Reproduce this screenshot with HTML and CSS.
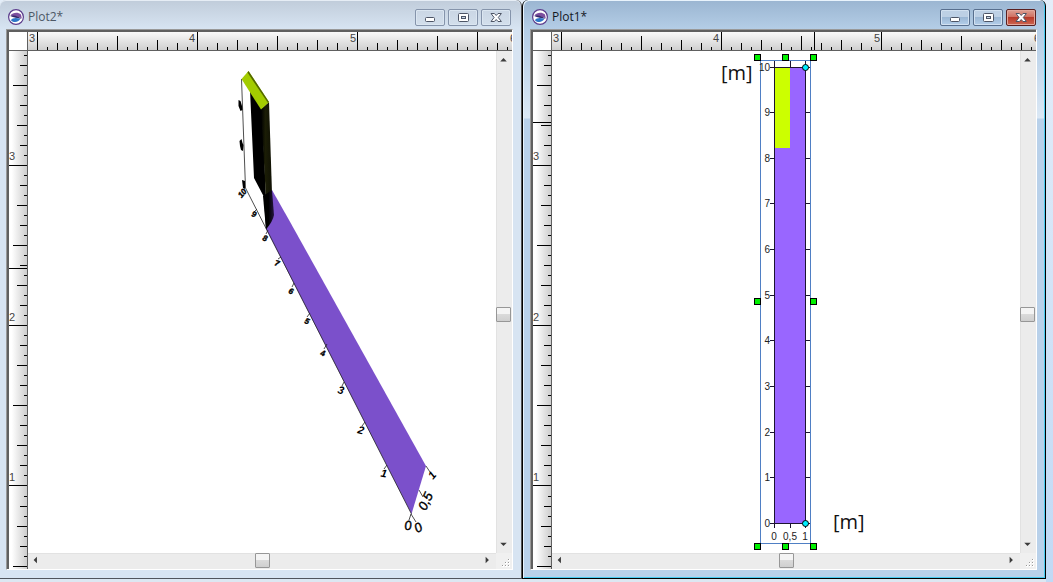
FILE: index.html
```html
<!DOCTYPE html>
<html lang="en">
<head>
<meta charset="utf-8">
<title>Plots</title>
<link rel="stylesheet" href="styles.css">
</head>
<body>
<svg class="defs" aria-hidden="true">
  <defs>
    <path id="h-unit" d="M10.5 15v3M20.5 11v7M30.5 15v3M40.5 8v10M50.5 15v3M60.5 11v7M70.5 15v3M80.5 4v14M90.5 15v3M100.5 11v7M110.5 15v3M120.5 8v10M130.5 15v3M140.5 11v7M150.5 15v3"/>
    <path id="v-unit" d="M15 10.5h3M11 20.5h7M15 30.5h3M8 40.5h10M15 50.5h3M11 60.5h7M15 70.5h3M4 80.5h14M15 90.5h3M11 100.5h7M15 110.5h3M8 120.5h10M15 130.5h3M11 140.5h7M15 150.5h3"/>
    <symbol id="logo" viewBox="0 0 16 16">
      <circle cx="8" cy="8" r="7.4" fill="#fff" stroke="#5b3c8c" stroke-width="1.2"/>
      <path d="M2.400 6.400C4.800 3.200 10 2.800 13 5.400L13.800 9.400C11 7.400 6 7 2.400 6.400Z" fill="#7d4f9e"/>
      <path d="M2.200 7C6 5.800 10.500 7 13.400 10C9.500 8.800 5.500 8.600 2.200 7Z" fill="#35276b"/>
      <path d="M2.800 11.200C4.400 8.800 8 8.200 12.400 9.800C11 13 6 14.400 2.800 11.200Z" fill="#2f77c8"/>
    </symbol>
    <symbol id="minimize" viewBox="0 0 30 17"><rect x="10.500" y="8.500" width="9" height="4" rx="1" fill="#fff" stroke="#4d5566"/></symbol>
    <symbol id="maximize" viewBox="0 0 30 17"><rect x="10.500" y="4.500" width="10" height="8" rx="1" fill="#fff" stroke="#4d5566"/><rect x="13.500" y="7.500" width="4" height="2" fill="#c8d6e6" stroke="#4d5566"/></symbol>
    <symbol id="close" viewBox="0 0 30 17"><path d="M10 4.500h3.400l1.800 2 1.800-2h3.400l-3.100 4 3.100 4H17l-1.800-2-1.800 2H10l3.100-4Z" fill="#fff" stroke="#4d5566"/></symbol>
    <symbol id="grip" viewBox="0 0 16 16"><path d="M12 6h2v2h-2zM9 9h2v2H9zM12 9h2v2h-2zM6 12h2v2H6zM9 12h2v2H9zM12 12h2v2h-2z" fill="#fff"/><path d="M12 6h1v1h-1zM9 9h1v1H9zM12 9h1v1h-1zM6 12h1v1H6zM9 12h1v1H9zM12 12h1v1h-1z" fill="#999"/></symbol>
    <linearGradient id="wall" x1="0" x2="1"><stop offset="0" stop-color="#000"/><stop offset=".4" stop-color="#1b1d06"/><stop offset="1" stop-color="#101104"/></linearGradient>
    <linearGradient id="foot" x1="0" y1="0" x2="1" y2="0"><stop offset=".5" stop-color="#000"/><stop offset="1" stop-color="#241540"/></linearGradient>
  </defs>
</svg>

<main class="desktop">
  <section class="window" aria-labelledby="t2">
    <header class="titlebar">
      <svg class="logo" aria-hidden="true"><use href="#logo"/></svg>
      <h2 class="title" id="t2">Plot2*</h2>
      <div class="controls">
        <button class="control" aria-label="Minimize"><svg><use href="#minimize"/></svg></button>
        <button class="control" aria-label="Maximize"><svg><use href="#maximize"/></svg></button>
        <button class="control" aria-label="Close"><svg><use href="#close"/></svg></button>
      </div>
    </header>
    <div class="client">
      <div class="corner"></div>
      <svg class="ruler ruler-h" aria-hidden="true">
        <g class="ticks">
          <use href="#h-unit" x="9"/><use href="#h-unit" x="169"/><use href="#h-unit" x="329"/>
          <path d="M9.500 0v18M169.500 0v18M329.500 0v18M449.500 0v8"/>
        </g>
        <text x="1" y="10">3</text><text x="161" y="10">4</text><text x="322" y="10">5</text><text x="482" y="10">6</text>
      </svg>
      <svg class="ruler ruler-v" aria-hidden="true">
        <g class="ticks">
          <use href="#v-unit" y="-46"/><use href="#v-unit" y="114"/><use href="#v-unit" y="274"/><use href="#v-unit" y="435"/>
          <path d="M0 114.500h18M0 274.500h18M0 434.500h18M0 217.500h18"/>
        </g>
        <text x="0" y="109">3</text><text x="0" y="270">2</text><text x="0" y="430">1</text>
      </svg>
      <svg class="canvas" role="img" aria-label="Three-dimensional plot">
        <g transform="translate(-28 -51)">
          <path d="M272 190L289 220L426 466L411.500 514L266 229Z" fill="#7b50cb"/>
          <path d="M241.500 79L245.500 188L411.500 514" fill="none" stroke="#222" stroke-width=".8"/>
          <path d="M250 90L262 108L266 198L266 229L264 197L254 178Z" fill="#000"/>
          <path d="M261 109L269 102L272 193L266 199Z" fill="url(#wall)"/>
          <path d="M263 196L272 190L274 215Q273 221 266 229.500Z" fill="url(#foot)"/>
          <path d="M241.500 79L248.500 71L269 102L261 109.500Z" fill="#a3cc00"/>
          <path d="M248.500 71L269 102L268 103L247.500 72.500Z" fill="#526600"/>
          <path d="M238.500 100l2 1 1.500 5 .5 4-2 1-2-5zM239.500 141l2-2 1 4 1 2-.5 6-2-1-1-4zM242 180l3 1v8l-2-1z" fill="#000"/>
          <path d="M254 212l3-3M266 234l2-4M278 259l3-2M292 287l2-4M307 317l3-4M324 349l3-5M342 386l2-4M362 426l3-4M384 469l3-4M409 520l2-6L416 522M419 490L423 497M426 466l4 6" fill="none" stroke="#222" stroke-width=".8"/>
          <g class="axis-3d">
            <text class="far" transform="translate(242 193) rotate(-50)" y="3">10</text>
            <text class="far" transform="translate(254 214) rotate(20)" y="3">9</text>
            <text class="far" transform="translate(265 238) rotate(20)" y="3">8</text>
            <text class="far" transform="translate(277 263) rotate(20)" y="3">7</text>
            <text class="far" transform="translate(291 291) rotate(20)" y="3">6</text>
            <text class="far" transform="translate(307 321) rotate(20)" y="3">5</text>
            <text class="far" transform="translate(323 353) rotate(15)" y="3">4</text>
            <text class="middle" transform="translate(341 390) rotate(15)" y="4">3</text>
            <text class="middle" transform="translate(361 430) rotate(15)" y="4">2</text>
            <text class="middle" transform="translate(384 473) rotate(10)" y="4">1</text>
            <text class="near" transform="translate(408 525) rotate(-5)" y="5">0</text>
            <text class="near" transform="translate(418 527) rotate(-30)" y="5">0</text>
            <text class="near" transform="translate(425 501) rotate(-65)" y="5">0,5</text>
            <text class="middle" transform="translate(432 475) rotate(-50)" y="4">1</text>
          </g>
        </g>
      </svg>
      <div class="scroll scroll-v">
        <button class="arrow" aria-label="Scroll up"><svg viewBox="0 0 16 16"><path d="M8 6.500L11.500 10H4.500Z"/></svg></button>
        <button class="thumb" aria-label="Vertical position"></button>
        <button class="arrow" aria-label="Scroll down"><svg viewBox="0 0 16 16"><path d="M8 9.500L11.500 6H4.500Z"/></svg></button>
      </div>
      <div class="scroll scroll-h">
        <button class="arrow" aria-label="Scroll left"><svg viewBox="0 0 16 16"><path d="M6 7.500L9.500 4V11Z"/></svg></button>
        <button class="thumb" aria-label="Horizontal position"></button>
        <button class="arrow" aria-label="Scroll right"><svg viewBox="0 0 16 16"><path d="M9.500 7.500L6 4V11Z"/></svg></button>
      </div>
      <svg class="grip" aria-hidden="true"><use href="#grip"/></svg>
    </div>
  </section>

  <section class="window active" aria-labelledby="t1">
    <header class="titlebar">
      <svg class="logo" aria-hidden="true"><use href="#logo"/></svg>
      <h2 class="title" id="t1">Plot1*</h2>
      <div class="controls">
        <button class="control" aria-label="Minimize"><svg><use href="#minimize"/></svg></button>
        <button class="control" aria-label="Maximize"><svg><use href="#maximize"/></svg></button>
        <button class="control close" aria-label="Close"><svg><use href="#close"/></svg></button>
      </div>
    </header>
    <div class="client">
      <div class="corner"></div>
      <svg class="ruler ruler-h" aria-hidden="true">
        <g class="ticks">
          <use href="#h-unit" x="9"/><use href="#h-unit" x="169"/><use href="#h-unit" x="329"/>
          <path d="M9.500 0v18M169.500 0v18M329.500 0v18M262.500 0v18"/>
        </g>
        <text x="1" y="10">3</text><text x="161" y="10">4</text><text x="322" y="10">5</text><text x="482" y="10">6</text>
      </svg>
      <svg class="ruler ruler-v" aria-hidden="true">
        <g class="ticks">
          <use href="#v-unit" y="-46"/><use href="#v-unit" y="114"/><use href="#v-unit" y="274"/><use href="#v-unit" y="435"/>
          <path d="M0 114.500h18M0 274.500h18M0 434.500h18M0 71.500h18"/>
        </g>
        <text x="0" y="109">3</text><text x="0" y="270">2</text><text x="0" y="430">1</text>
      </svg>
      <svg class="canvas" role="img" aria-label="Two-dimensional plot in metres">
        <g transform="translate(-552 -51)">
          <rect x="774" y="67" width="32" height="457" fill="#9966ff"/>
          <rect x="774" y="67" width="16" height="81" fill="#ccff00"/>
          <path class="axis-line" d="M774.500 61v467M805.500 61v467M770 67.500h40M770 523.500h40M790.500 61v6M790.500 524v4M770 112.500h4M770 158.500h4M770 203.500h4M770 249.500h4M770 295.500h4M770 340.500h4M770 386.500h4M770 432.500h4M770 477.500h4M806 112.500h4M806 158.500h4M806 203.500h4M806 249.500h4M806 295.500h4M806 340.500h4M806 386.500h4M806 432.500h4M806 477.500h4"/>
          <rect x="760.500" y="60.500" width="50" height="483" fill="none" stroke="#4f7fc4"/>
          <g class="axis-y">
            <text x="770" y="71">10</text><text x="770" y="116">9</text><text x="770" y="162">8</text><text x="770" y="207">7</text><text x="770" y="253">6</text><text x="770" y="299">5</text><text x="770" y="344">4</text><text x="770" y="390">3</text><text x="770" y="436">2</text><text x="770" y="481">1</text><text x="770" y="527">0</text>
          </g>
          <g class="axis-x">
            <text x="774" y="540">0</text><text x="790" y="540">0,5</text><text x="805" y="540">1</text>
          </g>
          <g class="unit"><text x="721" y="80">[m]</text><text x="833" y="529">[m]</text></g>
          <g class="handles">
            <rect x="754.500" y="54.500" width="6" height="6"/><rect x="782.500" y="54.500" width="6" height="6"/><rect x="810.500" y="54.500" width="6" height="6"/>
            <rect x="754.500" y="298.500" width="6" height="6"/><rect x="810.500" y="298.500" width="6" height="6"/>
            <rect x="754.500" y="543.500" width="6" height="6"/><rect x="782.500" y="543.500" width="6" height="6"/><rect x="810.500" y="543.500" width="6" height="6"/>
          </g>
          <g class="nodes"><circle cx="805.500" cy="67.500" r="3"/><circle cx="805.500" cy="523.500" r="3"/></g>
        </g>
      </svg>
      <div class="scroll scroll-v">
        <button class="arrow" aria-label="Scroll up"><svg viewBox="0 0 16 16"><path d="M8 6.500L11.500 10H4.500Z"/></svg></button>
        <button class="thumb" aria-label="Vertical position"></button>
        <button class="arrow" aria-label="Scroll down"><svg viewBox="0 0 16 16"><path d="M8 9.500L11.500 6H4.500Z"/></svg></button>
      </div>
      <div class="scroll scroll-h">
        <button class="arrow" aria-label="Scroll left"><svg viewBox="0 0 16 16"><path d="M6 7.500L9.500 4V11Z"/></svg></button>
        <button class="thumb" aria-label="Horizontal position"></button>
        <button class="arrow" aria-label="Scroll right"><svg viewBox="0 0 16 16"><path d="M9.500 7.500L6 4V11Z"/></svg></button>
      </div>
      <svg class="grip" aria-hidden="true"><use href="#grip"/></svg>
    </div>
  </section>
</main>
</body>
</html>
```

FILE: styles.css
```css
* { box-sizing: border-box; }

body {
  margin: 0;
  font-family: "Liberation Sans", Arial, sans-serif;
  background: #cddcec;
}

.defs { position: absolute; width: 0; height: 0; }

.desktop {
  display: grid;
  grid-template-columns: 522fr 524fr;
  min-height: 100vh;
  padding: 0 7px 3px 0;
  background: linear-gradient(#e4eef9, #c0d9f5);
}

.window {
  display: flex;
  flex-direction: column;
  min-width: 0;
  padding: 0 8px 8px 6px;
  border-right: 1px solid #555;
  border-bottom: 1px solid #50545c;
  border-radius: 6px 6px 0 0;
  background: linear-gradient(#c0ccda, #d7e4f2 29px);
  box-shadow: inset 0 1px #e6edf5, 0 3px #dce7f2;
}

.window.active {
  padding-left: 7px;
  border-left: 1px solid #000;
  border-right-color: #000;
  border-bottom-color: #000;
  background: linear-gradient(#9ab5d1, #b4cde6 29px, #dbe8f5 118px, #b9d1ea 119px);
  box-shadow: inset 1px 1px #e8f3fc, inset -1px -1px #48cbf0, 0 3px #dce7f2;
}

.titlebar {
  display: flex;
  align-items: center;
  height: 29px;
  gap: 4px;
  padding: 5px 2px 0;
}

.active .titlebar { padding-right: 1px; }

.logo { width: 16px; height: 16px; }

.title {
  flex: 1;
  margin: 0;
  font: 400 12px/16px "Open Sans", "Noto Sans", sans-serif;
  color: #4d5866;
}

.active .title { color: #14181f; }

.controls { display: flex; gap: 3px; }

.control {
  width: 30px;
  height: 17px;
  padding: 0;
  border: 1px solid #8594ab;
  border-radius: 2px;
  background: linear-gradient(#cad6e4, #d3dfec);
  box-shadow: inset 0 0 0 1px #dbe6f1;
}

.control svg { display: block; width: 30px; height: 17px; margin: -1px; }

.active .control {
  border-color: #586f8e;
  background: linear-gradient(#bdd0e5 50%, #9bb7d5 50%, #b4cfea);
  box-shadow: inset 0 0 0 1px #d2e1f1;
}

.active .close {
  border-color: #5a2020;
  background: linear-gradient(#dda093, #cf6c5d 50%, #b73a2a 50%, #ce6752);
  box-shadow: inset 0 0 0 1px #e3a79c;
}

.client {
  flex: 1;
  display: grid;
  grid-template-columns: 21px 1fr 16px;
  grid-template-rows: 21px 1fr 16px;
  border: 1px solid #fff;
  border-top-color: #999;
  border-left-color: #999;
  background: #fff;
}

.corner {
  border: solid #606060;
  border-width: 2px 1px 1px 2px;
  background: #fff;
}

.ruler { display: block; width: 100%; height: 100%; font-size: 11px; fill: #444; }

.ruler-h {
  grid-column: 2 / 4;
  border-top: 2px solid #606060;
  border-bottom: 1px solid #606060;
  background: linear-gradient(#fafafa, #cfcfcf);
}

.ruler-v {
  grid-row: 2 / 4;
  border-left: 2px solid #606060;
  border-right: 1px solid #606060;
  background: linear-gradient(90deg, #fff 15%, #cdcdcd);
}

.ticks { stroke: #000; }

.canvas { display: block; width: 100%; height: 100%; min-height: 0; }

.scroll { display: grid; background: #ececec; }

.scroll-v {
  grid-template-rows: 17px 239fr 15px 214fr 17px;
  padding-right: 1px;
  box-shadow: inset 1px 0 #e2e2e2;
}

.scroll-v .thumb { grid-row: 3; }
.scroll-v .arrow:last-child { grid-row: 5; }

.scroll-h {
  grid-template-columns: 16px 1fr 15px 1fr 16px;
  padding-bottom: 1px;
  box-shadow: inset 0 1px #e2e2e2;
}

.scroll-h .thumb { grid-column: 3; }
.scroll-h .arrow:last-child { grid-column: 5; }

.arrow { padding: 0; border: 0; background: transparent; }
.arrow svg { display: block; width: 15px; height: 15px; fill: #3c3c3c; }

.thumb {
  padding: 0;
  border: 1px solid #979797;
  border-radius: 1px;
  background: linear-gradient(#f4f4f4 50%, #dadada 50%, #cfcfcf);
}

.grip { width: 16px; height: 16px; background: #f0f0f0; }

.axis-3d { font-style: italic; font-weight: 700; text-anchor: middle; }
.far { font-size: 8px; stroke: #000; stroke-width: 0.4px; }
.middle { font-size: 11px; }
.near { font-size: 13px; font-weight: 400; stroke: #000; stroke-width: 0.4px; }

.axis-line { fill: none; stroke: #1c1430; }

.axis-y, .axis-x {
  font-size: 10px;
  fill: #222;
}

.axis-y { text-anchor: end; }
.axis-x { text-anchor: middle; }

.unit { font: 20px "Open Sans", "Noto Sans", sans-serif; fill: #111; }
.handles { fill: #00f000; stroke: #000; }
.nodes { fill: #00f0ff; stroke: #000; }
```
